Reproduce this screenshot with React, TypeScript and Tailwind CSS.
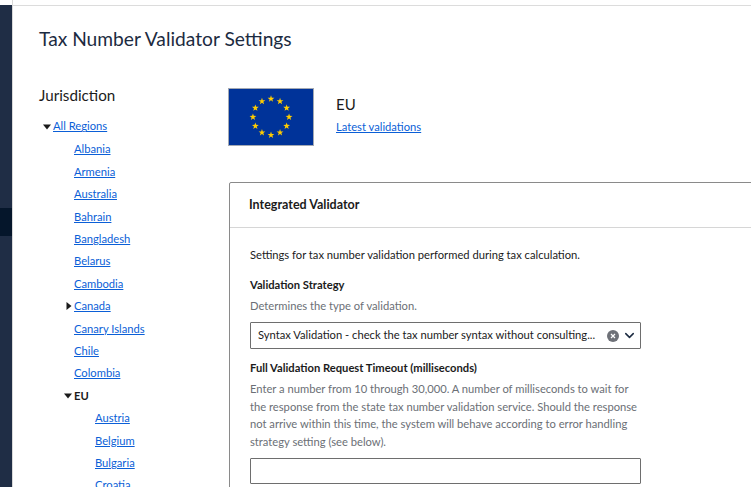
import { ChevronDown } from 'lucide-react';

const regions = ['Albania', 'Armenia', 'Australia', 'Bahrain', 'Bangladesh', 'Belarus', 'Cambodia', 'Canada', 'Canary Islands', 'Chile', 'Colombia'];
const euRegions = ['Austria', 'Belgium', 'Bulgaria', 'Croatia'];

const linkClass = 'text-[#0b5fd7] underline';

function EuFlag() {
  const stars = Array.from({ length: 12 }, (_, i) => {
    const a = (i * Math.PI) / 6;
    return { x: 42.5 + 18.7 * Math.sin(a), y: 29 - 18.7 * Math.cos(a) };
  });
  return (
    <svg width="86" height="58" viewBox="0 0 85 58" className="block border border-[#a3a9b3] bg-[#003399]">
      {stars.map((s, i) => (
        <polygon
          key={i}
          transform={`translate(${s.x} ${s.y}) scale(3.7)`}
          fill="#ffcc00"
          points="0,-1 0.235,-0.324 0.951,-0.309 0.38,0.124 0.588,0.809 0,0.4 -0.588,0.809 -0.38,0.124 -0.951,-0.309 -0.235,-0.324"
        />
      ))}
    </svg>
  );
}

function Caret({ open }: { open: boolean }) {
  return (
    <svg width="8" height="8" viewBox="0 0 8 8" className="shrink-0 fill-[#1b1b1b]">
      {open ? <path d="M0 1.5h8L4 6.5z" /> : <path d="M1.5 0v8L6.5 4z" />}
    </svg>
  );
}

function Tree() {
  return (
    <div className="text-[11.2px] leading-[22.4px]">
      <div className="flex items-center gap-[2px] pl-[4px]">
        <Caret open />
        <a className={linkClass}>All Regions</a>
      </div>
      <ul className="pl-[21px] pt-[0.5px]">
        {regions.map((r) => (
          <li key={r} className="relative pl-[14px]">
            {r === 'Canada' && (
              <span className="absolute left-[5px] top-[7px]">
                <Caret open={false} />
              </span>
            )}
            <a className={linkClass}>{r}</a>
          </li>
        ))}
        <li className="relative pl-[14px] font-bold text-[#1b1b1b]">
          <span className="absolute left-[4px] top-[7px]">
            <Caret open />
          </span>
          EU
        </li>
        <ul className="pl-[21px]">
          {euRegions.map((r) => (
            <li key={r} className="pl-[14px]">
              <a className={linkClass}>{r}</a>
            </li>
          ))}
        </ul>
      </ul>
    </div>
  );
}

export default function App() {
  return (
    <div className="flex h-screen overflow-hidden bg-white font-['Lato','Noto_Sans',sans-serif] text-[#1b1b1b]">
      {/* Side strip */}
      <div className="flex w-[13px] shrink-0 flex-col border-r border-[#d9d9d9]">
        <div className="h-[5px] shrink-0 bg-white" />
        <div className="h-[203px] bg-[#1f2d45]" />
        <div className="h-[28px] bg-[#05162b]" />
        <div className="flex-1 bg-[#1f2d45]" />
      </div>

      <div className="min-w-0 flex-1">
        <div className="mt-[5px] h-px bg-[#dcdcdc]" />
        <div className="pl-[26px]">
          <h1 className="mt-[21px] text-[19.2px] leading-[24px] text-[#1c2b41]">Tax Number Validator Settings</h1>

          <div className="mt-[23px] flex">
            <aside className="w-[189px] shrink-0 pt-[12px]">
              <h2 className="text-[15.2px] leading-[18px] text-[#1b1b1b]">Jurisdiction</h2>
              <div className="mt-[11.4px]">
                <Tree />
              </div>
            </aside>

            <main className="w-[560px] min-w-0 shrink-0">
              <div className="flex pt-[14px]">
                <EuFlag />
                <div className="ml-[22px] pt-[6px]">
                  <div className="text-[15px] leading-[20px]">EU</div>
                  <a className={`mt-[4px] block text-[11.2px] leading-[18px] ${linkClass}`}>Latest validations</a>
                </div>
              </div>

              <section className="mt-[36px] ml-px rounded-tl-[2px] border border-[#8a8a8a] bg-white">
                <div className="border-b border-[#d6d6d6] px-[19px] py-[13px] text-[12.5px] font-bold leading-[18px] text-[#1b1b1b]">
                  Integrated Validator
                </div>
                <div className="pl-[20px] pr-[19px] pt-[18px] pb-[32px] text-[11.2px]">
                  <p className="leading-[18px]">Settings for tax number validation performed during tax calculation.</p>

                  <label className="mt-[12px] block font-bold leading-[18px]">Validation Strategy</label>
                  <p className="mt-[3px] leading-[18px] text-[#6b6f76]">Determines the type of validation.</p>
                  <div className="mt-[7px] flex h-[27px] w-[391px] items-center rounded-[1px] border border-[#6e6e6e] pl-[7px] pr-[3px]">
                    <span className="min-w-0 flex-1 truncate">Syntax Validation - check the tax number syntax without consulting...</span>
                    <span className="ml-[9px] flex h-[12px] w-[12px] shrink-0 items-center justify-center rounded-full bg-[#6e7178]">
                      <svg width="6" height="6" viewBox="0 0 6 6" stroke="#ffffff" strokeWidth="1.2">
                        <path d="M1 1l4 4M5 1l-4 4" />
                      </svg>
                    </span>
                    <ChevronDown size={15} strokeWidth={2.4} className="ml-[3px] shrink-0 text-[#1c2b41]" />
                  </div>

                  <label className="mt-[10px] block font-bold leading-[18px]">Full Validation Request Timeout (milliseconds)</label>
                  <p className="mt-[3px] w-[391px] leading-[17.6px] text-[#6b6f76]">
                    Enter a number from 10 through 30,000. A number of milliseconds to wait for the response from the state tax number validation service. Should the response not arrive within this time, the system will behave according to error handling strategy setting (see below).
                  </p>
                  <input className="mt-[8px] block h-[26px] w-[391px] rounded-[1px] border border-[#6e6e6e]" />
                </div>
              </section>
            </main>
          </div>
        </div>
      </div>
    </div>
  );
}
